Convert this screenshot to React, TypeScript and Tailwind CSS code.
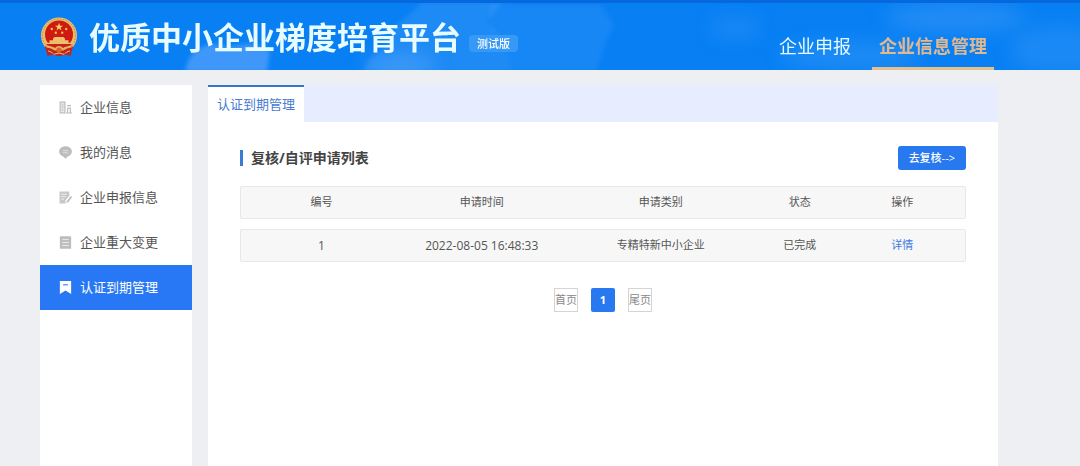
import { useState } from 'react';

type IconProps = { className?: string };

const BuildingIcon = ({ className }: IconProps) => (
  <svg viewBox="0 0 13 13" className={className} fill="none" stroke="currentColor" strokeWidth="1.2" aria-hidden="true">
    <path d="M1.200 1.200h4.800v10.600H1.200z" fill="currentColor" fillOpacity=".35" />
    <path d="M2.900 3.800h1.400M2.900 6.200h1.400M2.900 8.600h1.400" />
    <path d="M8 4.600h4M8.600 7.200h2.800v4.600M8.600 12V7.200M7 12h6" />
  </svg>
);

const MessageIcon = ({ className }: IconProps) => (
  <svg viewBox="0 0 12 12" className={className} aria-hidden="true">
    <path d="M6 .2C2.700.2.1 2.300.1 5.100c0 2.200 1.600 3.900 3.800 4.600L6 11.800l2.100-2.100c2.200-.7 3.800-2.400 3.800-4.600C11.900 2.300 9.300.2 6 .2z" fill="currentColor" />
    <path d="M3.500 4.300h5M3.500 6.300h5" stroke="#fff" strokeWidth=".8" strokeOpacity=".6" />
  </svg>
);

const FormIcon = ({ className }: IconProps) => (
  <svg viewBox="0 0 12 12" className={className} aria-hidden="true">
    <path d="M.5.5h9v4L6 8.500v3H.5z" fill="currentColor" fillOpacity=".85" />
    <path d="M2 3h5.500M2 5.300h4.500M2 7.600h2.500" stroke="#fff" strokeWidth=".8" strokeOpacity=".8" />
    <path d="M11.300 4.300 7.200 9.200l-.5 1.800 1.700-.7 3.600-4.300" fill="currentColor" />
  </svg>
);

const DocIcon = ({ className }: IconProps) => (
  <svg viewBox="0 0 12 12" className={className} aria-hidden="true">
    <rect x=".8" y=".2" width="10.400" height="11.600" rx=".6" fill="currentColor" />
    <path d="M3 3.200h6M3 6h6M3 8.800h6" stroke="#fff" strokeWidth=".8" strokeOpacity=".8" />
  </svg>
);

const BookmarkIcon = ({ className }: IconProps) => (
  <svg viewBox="0 0 12 12" className={className} aria-hidden="true">
    <path d="M.8 0h10.400v12L6 8.800.8 12z" fill="currentColor" />
    <path d="M3.800 3.500h4.400" stroke="#2878f6" strokeWidth="1" />
  </svg>
);

const Emblem = () => (
  <svg viewBox="0 0 38 40" className="h-10 w-[38px] shrink-0" aria-hidden="true">
    <path d="M6.500 29h25l-.5 9.500-6-.8-6 1.300-6-1.300-6 .8z" fill="#c4231c" />
    <circle cx="19" cy="18.500" r="18" fill="#e9bd6c" />
    <circle cx="19" cy="18.500" r="16.500" fill="none" stroke="#c98a3c" strokeWidth="1" strokeDasharray="1.500 1.500" />
    <circle cx="19" cy="17.500" r="14" fill="#cf1a10" />
    <path d="m19 5.800 1 2.900h3l-2.400 1.800.9 2.900-2.500-1.800-2.500 1.800.9-2.900L15 8.700h3z" fill="#f6cf66" />
    <g fill="#f2c05a">
      <circle cx="11.800" cy="12" r="1.200" />
      <circle cx="26.200" cy="12" r="1.200" />
      <circle cx="15.800" cy="15.700" r="1.200" />
      <circle cx="22.200" cy="15.700" r="1.200" />
    </g>
    <path d="M13 21.500 14.500 20h9l1.500 1.500v1.700h3.500v2.500H31v2.300H7v-2.300h2.500v-2.500H13z" fill="#f0bd6c" />
    <path d="M7 27h24l2 3.500-3 8-5-.8-6 1.300-6-1.300-5 .8-3-8z" fill="#c4231c" />
    <path d="M6 28c4 1.500 7 1.200 9 3a5 5 0 0 1 8 0c2-1.800 5-1.500 9-3l-.5 2.600c-4 .3-5.500 1.600-8 2.900h-9c-2.500-1.300-4-2.600-8-2.900z" fill="#e6b15d" />
    <circle cx="19" cy="33" r="2.600" fill="#d9632d" />
    <path d="M8 34c2.500.3 4 1.500 5.500 3M30 34c-2.500.3-4 1.500-5.500 3M14 37.300l5-1.300 5 1.300" fill="none" stroke="#edc27a" strokeWidth="1" />
  </svg>
);

const HeaderClouds = () => (
  <svg viewBox="0 0 1080 70" preserveAspectRatio="none" className="absolute inset-0 -z-10 h-full w-full" aria-hidden="true">
    <defs>
      <filter id="soft" x="-30%" y="-60%" width="160%" height="220%">
        <feGaussianBlur stdDeviation="9" />
      </filter>
      <filter id="edge">
        <feGaussianBlur stdDeviation="2" />
      </filter>
    </defs>
    <g fill="#8fc0ff" filter="url(#soft)">
      <ellipse cx="735" cy="28" rx="25" ry="10" opacity=".14" />
      <ellipse cx="955" cy="18" rx="70" ry="14" opacity=".2" />
      <ellipse cx="850" cy="56" rx="70" ry="14" opacity=".16" />
      <ellipse cx="1060" cy="50" rx="50" ry="24" opacity=".14" />
      <ellipse cx="400" cy="66" rx="36" ry="12" opacity=".28" />
    </g>
    <g fill="#8fc0ff" filter="url(#edge)">
      <path d="M362 72l8-14 12-8 10-22 18-14 12-12h80l-14 20 18 22 6 28z" opacity=".16" />
      <path d="M490 4h110l14 20-10 24-8 24H512l-6-28-16-14z" opacity=".1" />
    </g>
    <path d="M185 72c2-12 7-20 15-24l10-4 18 3 20-3 22 6-3 22z" fill="#84b6ff" opacity=".45" filter="url(#edge)" />
    <path d="M0 0h1080v3H0z" fill="#0568dc" />
  </svg>
);

const menu = [
  { label: '企业信息', Icon: BuildingIcon },
  { label: '我的消息', Icon: MessageIcon },
  { label: '企业申报信息', Icon: FormIcon },
  { label: '企业重大变更', Icon: DocIcon },
  { label: '认证到期管理', Icon: BookmarkIcon },
];

const records = [
  { id: 1, time: '2022-08-05 16:48:33', category: '专精特新中小企业', status: '已完成' },
];

const Header = () => (
  <header className="relative isolate flex h-[70px] items-end justify-between bg-[#0880f4] pr-[86px] pl-10">
    <HeaderClouds />
    <div className="flex items-center self-center pt-1">
      <Emblem />
      <h1 className="ml-[11px] text-[31px] leading-10 font-bold whitespace-nowrap text-[#e8fbff]">
        优质中小企业梯度培育平台
      </h1>
      <span className="mt-3 ml-2 rounded bg-[#3699f5] px-2 text-[11px] leading-[17px] font-medium whitespace-nowrap text-white">
        测试版
      </span>
    </div>
    <nav className="flex gap-[14px] text-lg leading-[42px] whitespace-nowrap">
      <a href="#apply" className="border-b-3 border-transparent px-[7px] text-[#e6fbff]">企业申报</a>
      <a href="#info" className="border-b-3 border-[#e6c08c] px-[7px] font-bold text-[#e2b98f]">企业信息管理</a>
    </nav>
  </header>
);

const Sidebar = () => {
  const [active, setActive] = useState('认证到期管理');

  return (
    <aside className="w-[152px] shrink-0 bg-white">
      <ul>
        {menu.map(({ label, Icon }) => (
          <li key={label}>
            <button
              type="button"
              onClick={() => setActive(label)}
              className={`flex h-[45px] w-full items-center gap-2 pl-[19px] text-[13px] ${
                active === label ? 'bg-[#2878f6] text-white' : 'text-[#555]'
              }`}
            >
              <Icon className={`h-[13px] w-[13px] ${active === label ? 'text-white' : 'text-[#bdbdbd]'}`} />
              {label}
            </button>
          </li>
        ))}
      </ul>
    </aside>
  );
};

const RecordTable = () => (
  <table className="mt-[6px] w-full table-fixed border-separate border-spacing-x-0 border-spacing-y-[10px] text-center text-[11px] text-[#555]">
    <colgroup>
      <col className="w-[22.3%]" />
      <col className="w-[22%]" />
      <col className="w-[27.3%]" />
      <col className="w-[11%]" />
      <col />
    </colgroup>
    <thead>
      <tr className="*:h-[33px] *:border-y *:border-[#e8e8e8] *:bg-[#f7f7f7] *:p-0 *:font-normal">
        <th className="rounded-l-xs border-l">编号</th>
        <th>申请时间</th>
        <th>申请类别</th>
        <th>状态</th>
        <th className="rounded-r-xs border-r">操作</th>
      </tr>
    </thead>
    <tbody>
      {records.map((r) => (
        <tr key={r.id} className="*:h-[33px] *:border-y *:border-[#e8e8e8] *:bg-[#f7f7f7] *:p-0">
          <td className="rounded-l-xs border-l text-xs">{r.id}</td>
          <td className="text-xs">{r.time}</td>
          <td>{r.category}</td>
          <td>{r.status}</td>
          <td className="rounded-r-xs border-r">
            <a href="#detail" className="text-[#3f7be0]">详情</a>
          </td>
        </tr>
      ))}
    </tbody>
  </table>
);

const Pagination = () => (
  <nav className="mt-4 flex justify-center gap-[13px] text-[11px] whitespace-nowrap text-[#888]">
    <button type="button" className="h-6 w-6 border border-[#d4d4d4]">首页</button>
    <button type="button" className="h-6 w-6 rounded-xs bg-[#2878f0] font-bold text-white">1</button>
    <button type="button" className="h-6 w-6 border border-[#d4d4d4]">尾页</button>
  </nav>
);

const App = () => (
  <div className="flex min-h-screen flex-col bg-[#eeeff3] font-['Open_Sans','Noto_Sans_CJK_SC',sans-serif]">
    <Header />
    <div className="flex flex-1 gap-4 pt-[15px] pr-[82px] pl-10">
      <Sidebar />
      <main className="min-w-0 flex-1 bg-white">
        <div className="flex bg-[#e7ecfe]">
          <button type="button" className="h-[37px] border-t-2 border-[#3a74cc] bg-white px-[9px] text-[13px] text-[#4a7bd0]">
            认证到期管理
          </button>
        </div>
        <section className="px-8 pt-6">
          <div className="flex items-center justify-between">
            <h2 className="flex items-center gap-2 text-sm leading-6 font-bold text-[#444]">
              <span className="h-4 w-[3px] bg-[#3a7bd5]" />
              复核/自评申请列表
            </h2>
            <button type="button" className="h-6 rounded-[3px] bg-[#2878f0] px-[11px] text-[11px] font-medium text-white">
              去复核--&gt;
            </button>
          </div>
          <RecordTable />
          <Pagination />
        </section>
      </main>
    </div>
  </div>
);

export default App;
